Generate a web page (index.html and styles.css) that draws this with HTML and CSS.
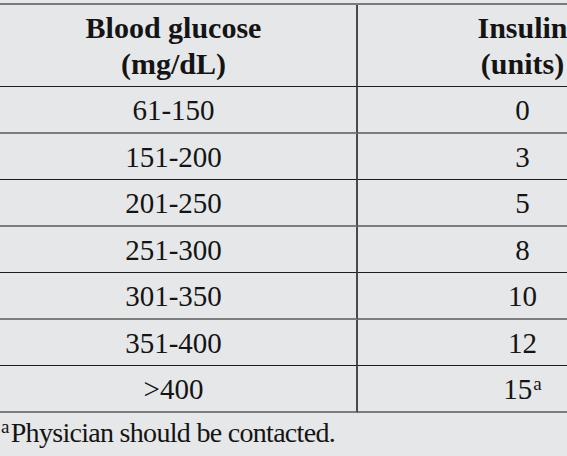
FILE: index.html
```html
<!DOCTYPE html>
<html lang="en">
<head>
<meta charset="utf-8">
<title>Sliding scale insulin</title>
<link rel="stylesheet" href="styles.css">
</head>
<body>
<div class="frame">
  <div class="table">
    <div class="cell head left"><span>Blood glucose<br>(mg/dL)</span></div>
    <div class="cell head right"><span>Insulin<br>(units)</span></div>

    <div class="cell left row-a"><span>61-150</span></div>
    <div class="cell right row-a"><span>0</span></div>

    <div class="cell left row-b"><span>151-200</span></div>
    <div class="cell right row-b"><span>3</span></div>

    <div class="cell left row-a"><span>201-250</span></div>
    <div class="cell right row-a"><span>5</span></div>

    <div class="cell left row-b"><span>251-300</span></div>
    <div class="cell right row-b"><span>8</span></div>

    <div class="cell left row-a"><span>301-350</span></div>
    <div class="cell right row-a"><span>10</span></div>

    <div class="cell left row-b"><span>351-400</span></div>
    <div class="cell right row-b"><span>12</span></div>

    <div class="cell left row-a"><span>&gt;400</span></div>
    <div class="cell right row-a"><span>15<sup class="note">a</sup></span></div>
  </div>
  <p class="footnote"><sup class="note-foot">a</sup>Physician should be contacted.</p>
</div>
</body>
</html>
```

FILE: styles.css
```css
html, body {
  margin: 0;
  padding: 0;
  background: #e6e7e8;
  overflow: hidden;
}

body {
  padding-top: 3px;
  font-family: "Liberation Serif", "Times New Roman", serif;
  color: #141414;
}

.frame {
  margin-left: -9px;
  width: 696px;
}

.table {
  display: grid;
  grid-template-columns: 367px 329px;
  border-top: 2px solid #7a7a7a;
}

.cell {
  box-sizing: border-box;
  display: flex;
  align-items: center;
  justify-content: center;
  text-align: center;
  font-size: 29px;
  line-height: 36px;
  height: 46px;
}

.left {
  border-right: 2px solid #4a4a4a;
}

.head {
  font-weight: bold;
  font-size: 30px;
  height: 82px;
  border-bottom: 1px solid #1e1e1e;
}

.row-a {
  height: 47px;
  border-bottom: 2px solid #7d7d7d;
}

.row-b {
  height: 46px;
  border-bottom: 1px solid #1e1e1e;
}

.note {
  font-size: 19px;
  line-height: 0;
  vertical-align: 9px;
  margin-left: 1px;
}

.footnote {
  margin: 0;
  padding: 2px 0 0 10px;
  font-size: 28px;
  line-height: 36px;
  letter-spacing: -0.7px;
}

.note-foot {
  font-size: 19px;
  line-height: 0;
  vertical-align: 9px;
  margin-right: 2px;
}
```
